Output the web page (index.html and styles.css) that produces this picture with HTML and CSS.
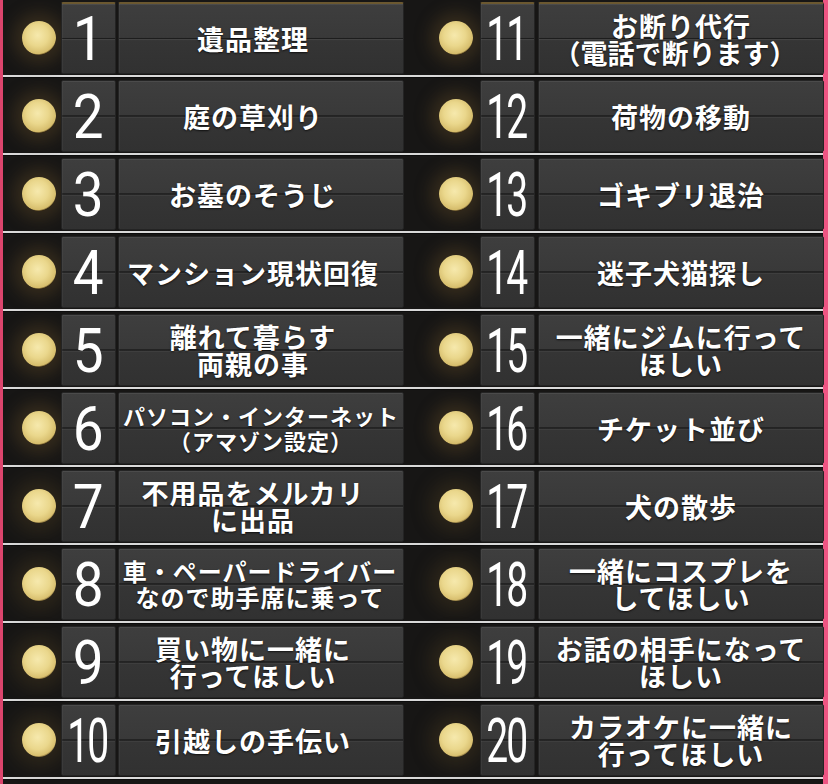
FILE: index.html
```html
<!DOCTYPE html>
<html lang="ja">
<head>
<meta charset="utf-8">
<title>お手伝いメニュー</title>
<link rel="stylesheet" href="styles.css">
</head>
<body>
<div class="board">
  <div class="row">
    <div class="cell left"><div class="lamp-area"><span class="lamp"></span></div><div class="tile num"><span class="d1">1</span></div><div class="tile label">遺品整理</div></div>
    <div class="cell right"><div class="lamp-area"><span class="lamp"></span></div><div class="tile num"><span class="d2">11</span></div><div class="tile label">お断り代行<br><span class="shift">（電話で断ります）</span></div></div>
  </div>
  <div class="row">
    <div class="cell left"><div class="lamp-area"><span class="lamp"></span></div><div class="tile num"><span class="d1">2</span></div><div class="tile label">庭の草刈り</div></div>
    <div class="cell right"><div class="lamp-area"><span class="lamp"></span></div><div class="tile num"><span class="d2">12</span></div><div class="tile label">荷物の移動</div></div>
  </div>
  <div class="row">
    <div class="cell left"><div class="lamp-area"><span class="lamp"></span></div><div class="tile num"><span class="d1">3</span></div><div class="tile label">お墓のそうじ</div></div>
    <div class="cell right"><div class="lamp-area"><span class="lamp"></span></div><div class="tile num"><span class="d2">13</span></div><div class="tile label">ゴキブリ退治</div></div>
  </div>
  <div class="row">
    <div class="cell left"><div class="lamp-area"><span class="lamp"></span></div><div class="tile num"><span class="d1">4</span></div><div class="tile label">マンション現状回復</div></div>
    <div class="cell right"><div class="lamp-area"><span class="lamp"></span></div><div class="tile num"><span class="d2">14</span></div><div class="tile label">迷子犬猫探し</div></div>
  </div>
  <div class="row">
    <div class="cell left"><div class="lamp-area"><span class="lamp"></span></div><div class="tile num"><span class="d1">5</span></div><div class="tile label">離れて暮らす<br>両親の事</div></div>
    <div class="cell right"><div class="lamp-area"><span class="lamp"></span></div><div class="tile num"><span class="d2">15</span></div><div class="tile label">一緒にジムに行って<br>ほしい</div></div>
  </div>
  <div class="row">
    <div class="cell left"><div class="lamp-area"><span class="lamp"></span></div><div class="tile num"><span class="d1">6</span></div><div class="tile label small">パソコン・インターネット<br>（アマゾン設定）</div></div>
    <div class="cell right"><div class="lamp-area"><span class="lamp"></span></div><div class="tile num"><span class="d2">16</span></div><div class="tile label">チケット並び</div></div>
  </div>
  <div class="row">
    <div class="cell left"><div class="lamp-area"><span class="lamp soft"></span></div><div class="tile num"><span class="d1">7</span></div><div class="tile label">不用品をメルカリ<br>に出品</div></div>
    <div class="cell right"><div class="lamp-area"><span class="lamp soft"></span></div><div class="tile num"><span class="d2">17</span></div><div class="tile label">犬の散歩</div></div>
  </div>
  <div class="row">
    <div class="cell left"><div class="lamp-area"><span class="lamp soft"></span></div><div class="tile num"><span class="d1">8</span></div><div class="tile label medium">車・ペーパードライバー<br>なので助手席に乗って</div></div>
    <div class="cell right"><div class="lamp-area"><span class="lamp soft"></span></div><div class="tile num"><span class="d2">18</span></div><div class="tile label">一緒にコスプレを<br>してほしい</div></div>
  </div>
  <div class="row">
    <div class="cell left"><div class="lamp-area"><span class="lamp soft"></span></div><div class="tile num"><span class="d1">9</span></div><div class="tile label">買い物に一緒に<br>行ってほしい</div></div>
    <div class="cell right"><div class="lamp-area"><span class="lamp soft"></span></div><div class="tile num"><span class="d2">19</span></div><div class="tile label">お話の相手になって<br>ほしい</div></div>
  </div>
  <div class="row">
    <div class="cell left"><div class="lamp-area"><span class="lamp soft"></span></div><div class="tile num"><span class="d2">10</span></div><div class="tile label">引越しの手伝い</div></div>
    <div class="cell right"><div class="lamp-area"><span class="lamp soft"></span></div><div class="tile num"><span class="d2">20</span></div><div class="tile label">カラオケに一緒に<br>行ってほしい</div></div>
  </div>
</div>
</body>
</html>
```
FILE: styles.css
```css
html, body {
  margin: 0;
  padding: 0;
  background: #161514;
}
body {
  width: 828px;
  height: 784px;
  overflow: hidden;
}
.board {
  width: 828px;
  min-height: 786px;
  box-sizing: border-box;
  margin-top: -1px;
  border-left: 3px solid #dc456d;
  border-right: 5px solid #ee5583;
  background: #171615;
}
.row {
  display: grid;
  grid-template-columns: 399px 421px;
  padding: 3px 0 1px;
  border-bottom: 2px solid #d9d9d9;
  box-shadow: 0 1px 0 #0c0c0c;
}
.cell {
  display: grid;
  height: 72px;
}
.cell.left {
  grid-template-columns: 56px 55px 286px;
  column-gap: 2px;
}
.cell.right {
  grid-template-columns: 75px 55px 286px;
  column-gap: 3px;
}
.lamp-area {
  display: flex;
  align-items: center;
  justify-content: flex-end;
  padding-right: 3px;
}
.right .lamp-area {
  padding-right: 4px;
}
.lamp {
  width: 34px;
  height: 34px;
  border-radius: 50%;
  background: radial-gradient(circle at 46% 42%, #f6e9ad 0, #ead78c 40%, #d6bd6c 68%, #3d2c12 74%, #2b1f0d 100%);
  box-shadow: 0 0 16px 9px rgba(92, 72, 38, 0.42);
}
.lamp.soft {
  background: radial-gradient(circle at 46% 42%, #f6e9ad 0, #ead78c 45%, #d9c070 68%, #5a4620 76%, #241a0c 100%);
  box-shadow: 0 0 18px 10px rgba(80, 62, 34, 0.38);
}
.tile {
  box-sizing: border-box;
  border: 1px solid #242424;
  border-radius: 2px;
  background: linear-gradient(#3e3e3e 0, #393939 48.5%, #1d1d1d 49.5%, #1d1d1d 50.5%, #454545 51.5%, #353535 53%, #313131 100%);
  box-shadow: inset 0 1px 0 rgba(255, 255, 255, 0.07), inset 1px 0 0 rgba(255, 255, 255, 0.04);
  color: #ffffff;
  display: flex;
  flex-direction: column;
  align-items: center;
  justify-content: center;
  text-align: center;
}
.row:first-child .tile {
  border-top: 2px solid #6b5830;
}
.num {
  font-family: Roboto, "Liberation Sans", sans-serif;
  font-weight: 400;
  font-size: 61px;
  line-height: 1;
  overflow: hidden;
}
.num span {
  display: inline-block;
  padding-top: 2px;
}
.num .d1 {
  transform: scaleX(0.9);
}
.num .d2 {
  letter-spacing: -3px;
  transform: scaleX(0.64);
  margin-left: -3px;
}
.label {
  display: block;
  padding-top: 0;
  font-family: "Noto Sans CJK JP", "Noto Sans", sans-serif;
  font-weight: 700;
  font-size: 27px;
  line-height: 27px;
  letter-spacing: 1px;
  text-shadow: 0 1px 2px rgba(0, 0, 0, 0.7);
  white-space: nowrap;
  display: flex;
  justify-content: center;
}
.label {
  display: grid;
  align-content: center;
  justify-content: center;
}
.left .label {
  padding-right: 16px;
}
.label .shift {
  margin-left: -12px;
  letter-spacing: 0;
}
.label.small {
  font-size: 22px;
  line-height: 25px;
  letter-spacing: 1px;
  padding-right: 0;
}
.label.medium {
  font-size: 24px;
  line-height: 26px;
  letter-spacing: 1px;
  padding-right: 2px;
}
```
